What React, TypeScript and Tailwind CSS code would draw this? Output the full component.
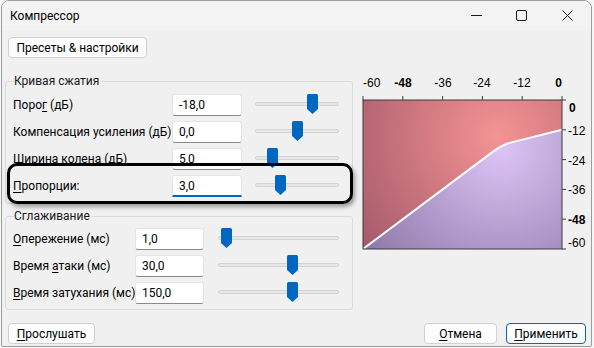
import React from "react";

type Row = { label: React.ReactNode; value: string; thumb: number; focused?: boolean };

const curveRows: Row[] = [
  { label: <>Поро<u className="underline-offset-2">г</u> (дБ)</>, value: "-18,0", thumb: 52 },
  { label: <>Компенсация усиления (дБ)</>, value: "0,0", thumb: 37 },
  { label: <>Ширина колена (дБ)</>, value: "5,0", thumb: 12 },
  { label: <><u className="underline-offset-2">П</u>ропорции:</>, value: "3,0", thumb: 20, focused: true },
];

const smoothRows: Row[] = [
  { label: <><u className="underline-offset-2">О</u>пережение (мс)</>, value: "1,0", thumb: 3 },
  { label: <>Время <u className="underline-offset-2">а</u>таки (мс)</>, value: "30,0", thumb: 69 },
  { label: <><u className="underline-offset-2">В</u>ремя затухания (мс)</>, value: "150,0", thumb: 69 },
];

function Thumb() {
  return (
    <svg width="11" height="20" viewBox="0 0 11 20" className="absolute top-0">
      <path d="M0 1.5 Q0 0 1.5 0 H9.5 Q11 0 11 1.5 V15 L5.5 20 L0 15 Z" fill="#0067c0" />
    </svg>
  );
}

function Slider({ width, thumb }: { width: number; thumb: number }) {
  return (
    <div className="relative h-[22px]" style={{ width }}>
      <div className="absolute left-0 right-0 top-[8px] h-[4px] bg-[#e7e7e7] border border-[#d3d3d3] rounded-[2px]" />
      <div className="absolute top-0" style={{ left: thumb }}>
        <Thumb />
      </div>
    </div>
  );
}

function Field({ value, width, focused }: { value: string; width: number; focused?: boolean }) {
  return (
    <div
      className={`h-[22px] bg-white border border-[#e5e5e5] rounded-[3px] flex items-center pl-[6px] text-[12px] text-black ${
        focused ? "border-b-2 border-b-[#0067c0] rounded-b-none" : "border-b-[#8a8a8a]"
      }`}
      style={{ width }}
    >
      {value}
    </div>
  );
}

function Button({ children, width, primary }: { children: React.ReactNode; width: number; primary?: boolean }) {
  return (
    <div
      className={`h-[21px] bg-[#fdfdfd] rounded-[4px] flex items-center justify-center text-[12px] text-black border ${
        primary ? "border-[#0067c0]" : "border-[#d0d0d0]"
      }`}
      style={{ width }}
    >
      {children}
    </div>
  );
}

function CurveGraph() {
  const topTicks = [0, 1, 2, 3, 4, 5].map((i) => 8 + (i * 199) / 5);
  const sideTicks = [0, 1, 2, 3, 4, 5].map((i) => 34 + (i * 149) / 5);
  const knee = "L139 84.9 Q147.3 78.7 155.6 76.6 L207 63.8";
  return (
    <svg width="238" height="190" viewBox="0 0 238 190" className="shrink-0 font-['Liberation_Sans',sans-serif]">
      <defs>
        <radialGradient id="redFill" gradientUnits="userSpaceOnUse" cx="143" cy="70" r="175">
          <stop offset="0" stopColor="#f49393" />
          <stop offset="1" stopColor="#a45a6a" />
        </radialGradient>
        <radialGradient id="violetFill" gradientUnits="userSpaceOnUse" cx="146" cy="82" r="175">
          <stop offset="0" stopColor="#dec4f6" />
          <stop offset="1" stopColor="#8a76a6" />
        </radialGradient>
      </defs>
      <path d={`M8 34 H207 V63.8 L155.6 76.6 Q147.3 78.7 139 84.9 L8 183 Z`} fill="url(#redFill)" />
      <path d={`M8 183 ${knee} V183 Z`} fill="url(#violetFill)" />
      <path d={`M8 183 ${knee}`} fill="none" stroke="#ffffff" strokeWidth="2" />
      <rect x="8" y="34" width="199" height="149" fill="none" stroke="#3d3d3d" strokeWidth="1" />
      {topTicks.map((x) => (
        <line key={x} x1={x} x2={x} y1={30} y2={34} stroke="#3d3d3d" />
      ))}
      {sideTicks.map((y) => (
        <line key={y} x1={207} x2={211} y1={y} y2={y} stroke="#3d3d3d" />
      ))}
      <g fontSize="12" fill="#000">
        <text x="8" y="21">-60</text>
        <text x="48" y="21" textAnchor="middle" fontWeight="bold">-48</text>
        <text x="88" y="21" textAnchor="middle">-36</text>
        <text x="127" y="21" textAnchor="middle">-24</text>
        <text x="167" y="21" textAnchor="middle">-12</text>
        <text x="207" y="21" textAnchor="end" fontWeight="bold">0</text>
        <text x="214" y="46" fontWeight="bold">0</text>
        <text x="213" y="69">-12</text>
        <text x="213" y="99">-24</text>
        <text x="213" y="128">-36</text>
        <text x="213" y="158" fontWeight="bold">-48</text>
        <text x="213" y="181">-60</text>
      </g>
    </svg>
  );
}

function Group({
  title,
  rows,
  labelWidth,
  fieldWidth,
  sliderWidth,
  gap,
  className,
}: {
  title: string;
  rows: Row[];
  labelWidth: number;
  fieldWidth: number;
  sliderWidth: number;
  gap: number;
  className: string;
}) {
  return (
    <fieldset className={`w-[348px] border border-[#dadada] rounded-[3px] pl-[7px] ${className}`}>
      <legend className="px-[1px] text-[12px] leading-[16px] text-[#1a1a1a]">{title}</legend>
      <div className="flex flex-col gap-[5px]">
        {rows.map((r) => (
          <div key={r.value} className="flex items-center h-[22px]">
            <div className="text-[12px] text-black whitespace-nowrap" style={{ width: labelWidth }}>
              {r.label}
            </div>
            <Field value={r.value} width={fieldWidth} focused={r.focused} />
            <div style={{ width: gap }} />
            <Slider width={sliderWidth} thumb={r.thumb} />
          </div>
        ))}
      </div>
    </fieldset>
  );
}

export default function App() {
  return (
    <div className="w-[594px] h-[348px] bg-[#f7f7f7] overflow-hidden font-['Roboto',sans-serif]">
      <div className="ml-[1px] w-[591px] h-[347px] border border-[#9c9c9c] rounded-t-[8px] rounded-b-[2px] overflow-hidden flex flex-col bg-[#f0f0f0]">
        {/* title bar */}
        <div className="h-[30px] bg-[#f3f3f3] flex items-center pl-[8px] shrink-0">
          <span className="text-[12px] text-black">Компрессор</span>
          <div className="ml-auto flex items-center h-full">
            <svg width="46" height="30" viewBox="0 0 46 30">
              <line x1="18" x2="29" y1="14.5" y2="14.5" stroke="#1a1a1a" />
            </svg>
            <svg width="46" height="30" viewBox="0 0 46 30">
              <rect x="17.5" y="9.5" width="10" height="10" rx="1.5" fill="none" stroke="#1a1a1a" />
            </svg>
            <svg width="46" height="30" viewBox="0 0 46 30">
              <path d="M17.5 9.5 L27.5 19.5 M27.5 9.5 L17.5 19.5" stroke="#1a1a1a" />
            </svg>
          </div>
        </div>

        {/* body */}
        <div className="pl-[6px] pt-[6px]">
          <Button width={139}>Пресеты &amp; настройки</Button>
        </div>

        <div className="flex mt-[8px]">
          <div className="relative pl-[3px] pt-[7px]">
            <Group
              title="Кривая сжатия"
              rows={curveRows}
              labelWidth={159}
              fieldWidth={70}
              sliderWidth={84}
              gap={13}
              className="pt-[5px] pb-[6px]"
            />
            <Group
              title="Сглаживание"
              rows={smoothRows}
              labelWidth={122}
              fieldWidth={69}
              sliderWidth={121}
              gap={14}
              className="mt-[4px] pt-[4px] pb-[5px]"
            />
            {/* highlight frame */}
            <div className="absolute left-[5px] top-[97px] w-[346px] h-[41px] border-[3px] border-black rounded-[10px] shadow-[2px_3px_4px_rgba(0,0,0,0.35)]" />
          </div>
          <div className="ml-[2px]">
            <CurveGraph />
          </div>
        </div>

        <div className="flex items-center mt-[13px] pl-[6px] pr-[5px]">
          <Button width={87}>
            <span><u className="underline-offset-2">П</u>рослушать</span>
          </Button>
          <div className="ml-auto flex gap-[9px]">
            <Button width={73}>
              <span><u className="underline-offset-2">О</u>тмена</span>
            </Button>
            <Button width={80} primary>
              <span><u className="underline-offset-2">П</u>рименить</span>
            </Button>
          </div>
        </div>
      </div>
    </div>
  );
}
